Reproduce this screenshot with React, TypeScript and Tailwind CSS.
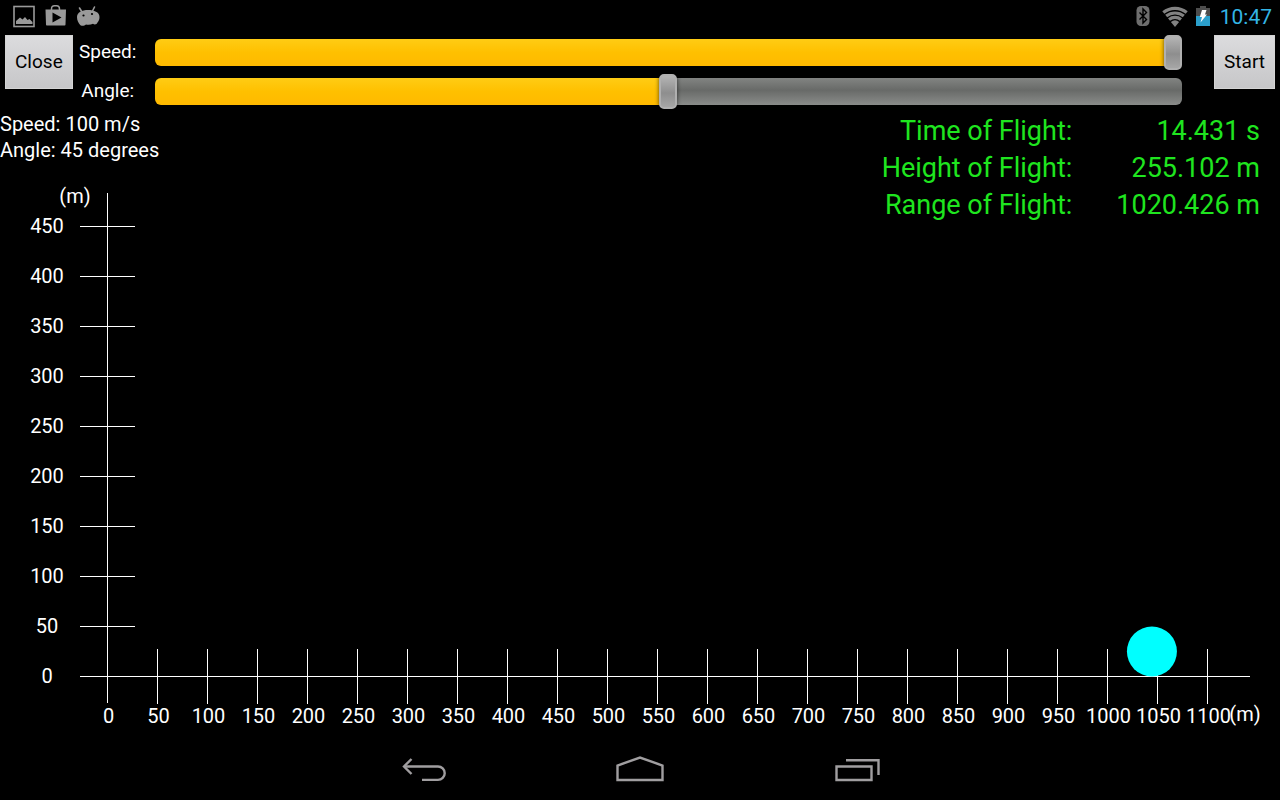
import React, { useState } from 'react';

interface SliderProps {
  id: string;
  label: string;
  value: number;
  max: number;
  onChange: (value: number) => void;
}

const GRAVITY = 9.8;
const ORIGIN_X = 107.5;
const ORIGIN_Y = 565.5;
const BALL_RADIUS = 25;

const xTicks = Array.from({ length: 23 }, (_, i) => i * 50);
const yTicks = Array.from({ length: 10 }, (_, i) => i * 50);

const StatusBar: React.FC = () => (
  <header className="flex h-8 items-center justify-between pl-3 pr-2">
    <div className="flex items-center gap-2 text-[#9a9a9a]">
      <svg width="24" height="24" viewBox="0 0 24 24" fill="none" aria-hidden="true">
        <rect x="2" y="2.5" width="20" height="20" stroke="currentColor" strokeWidth="1.6" />
        <path d="M4 20v-3l4-3.5 2.5 2 2.5-2.5 2.5 3 2-1 3 3v2z" fill="currentColor" />
      </svg>
      <svg width="24" height="24" viewBox="0 0 24 24" fill="none" aria-hidden="true">
        <path d="M7.5 6V5Q7.500 1.800 10.500 1.800h2Q15.500 1.800 15.500 5V6" stroke="currentColor" strokeWidth="1.5" />
        <path d="M1.500 5.500h20.500l-.5 15q0 1-.8 1H2.800q-.8 0-.8-1z" fill="currentColor" />
        <path d="M8.500 8.500v10l9-5z" fill="#000" />
      </svg>
      <svg width="24" height="24" viewBox="0 0 24 24" fill="none" aria-hidden="true">
        <path d="M3.500 4l2.500 4M18.500 3l-2 4" stroke="currentColor" strokeWidth="1.6" strokeLinecap="round" />
        <path d="M1 13C1 8.500 6 6 12 6s11.500 2 11.500 7c0 3-1 4-2 5.500-.6 2-3 2.500-4.500 1.300-2 1-5 1.200-7 .7-1.500 1.500-5 1.800-6 .3C2.500 19 1 16.500 1 13z" fill="currentColor" />
        <circle cx="7.5" cy="11.500" r="1.100" fill="#000" />
        <circle cx="16" cy="10" r="1.100" fill="#000" />
      </svg>
    </div>
    <div className="flex items-center gap-2.5">
      <div className="flex items-center gap-2">
        <svg width="22" height="22" viewBox="0 0 22 22" fill="none" aria-hidden="true">
          <rect x="4.500" y="1" width="13" height="20" rx="4.500" fill="#6e6e6e" />
          <path d="M7.500 7.500l7 7L11 18V4l3.500 3.500-7 7" stroke="#000" strokeWidth="1.400" />
        </svg>
        <svg width="26" height="22" viewBox="0 0 26 22" fill="none" stroke="#828282" strokeWidth="3.2" aria-hidden="true">
          <path d="M1.300 7.600a18.500 18.500 0 0 1 23.400 0" />
          <path d="M4.200 11.100a14 14 0 0 1 17.600 0" />
          <path d="M7 14.600a9.500 9.500 0 0 1 12 0" />
          <path d="M8.900 17L13 22l4.100-5a6.500 6.500 0 0 0-8.200 0z" fill="#828282" stroke="none" />
        </svg>
        <svg width="14" height="22" viewBox="0 0 14 22" aria-hidden="true">
          <path d="M4 1h6v2h4v8H0V3h4z" fill="#4d4d4d" />
          <path d="M0 11h14v10H0z" fill="#2b9fcb" />
          <path d="M6 5h4.500L9 9.500h2L4.500 17.500 6 12H3.800z" fill="#fff" />
        </svg>
      </div>
      <time className="pt-px text-[21px] leading-6 text-[#33b5e5]">10:47</time>
    </div>
  </header>
);

const Slider: React.FC<SliderProps> = ({ id, label, value, max, onChange }) => (
  <div className="flex h-[35px] items-center gap-3">
    <label htmlFor={id} className="w-[70px] shrink-0 pb-0.5 text-center">
      {label}
    </label>
    <input
      id={id}
      type="range"
      min={0}
      max={max}
      value={value}
      onChange={e => onChange(Number(e.target.value))}
      style={{ '--fill': `${(value / max) * 100}%` } as React.CSSProperties}
      className="h-[35px] w-full min-w-0 flex-1 cursor-pointer appearance-none bg-transparent [&::-webkit-slider-runnable-track]:h-[27px] [&::-webkit-slider-runnable-track]:rounded-md [&::-webkit-slider-runnable-track]:[background:linear-gradient(#ffcc14,#ffc000_50%,#ffb900)_0_0/var(--fill)_100%_no-repeat,linear-gradient(#828482,#686a68_45%,#8a8c8a)] [&::-webkit-slider-thumb]:-mt-1 [&::-webkit-slider-thumb]:h-[35px] [&::-webkit-slider-thumb]:w-[18px] [&::-webkit-slider-thumb]:appearance-none [&::-webkit-slider-thumb]:rounded-[5px] [&::-webkit-slider-thumb]:border-2 [&::-webkit-slider-thumb]:border-[#b0b0b0] [&::-webkit-slider-thumb]:bg-[linear-gradient(#b4b4b4,#8e8e8e_55%,#a6a6a6)] [&::-webkit-slider-thumb]:shadow-[0_0_4px_#000000a0]"
    />
  </div>
);

const buttonClass =
  'h-[54px] shrink-0 bg-linear-to-b from-[#dcdcde] to-[#c6c6c8] px-2.5 text-black shadow-[inset_0_0_0_1px_#d4d4d4]';

const Plot: React.FC<{ range: number }> = ({ range }) => (
  <svg viewBox="0 0 1280 629" className="col-start-1 row-start-1 h-auto w-full" role="img" aria-label="Flight plot">
    <g stroke="#fff" strokeWidth="1">
      <line x1={ORIGIN_X} y1="82" x2={ORIGIN_X} y2="592" />
      <line x1="80" y1={ORIGIN_Y} x2="1250" y2={ORIGIN_Y} />
      {yTicks.slice(1).map(v => (
        <line key={v} x1="80" y1={ORIGIN_Y - v} x2="135" y2={ORIGIN_Y - v} />
      ))}
      {xTicks.slice(1).map(v => (
        <line key={v} x1={ORIGIN_X + v} y1="538" x2={ORIGIN_X + v} y2="593" />
      ))}
    </g>
    <g fill="#fff" fontSize="20" textAnchor="middle">
      <text x="75" y="92">(m)</text>
      {yTicks.map(v => (
        <text key={v} x="47" y={ORIGIN_Y - v + 6}>{v}</text>
      ))}
      {xTicks.map(v => (
        <text key={v} x={ORIGIN_X + v + 1} y="612">{v}</text>
      ))}
      <text x="1245" y="610">(m)</text>
    </g>
    <circle cx={ORIGIN_X + range + BALL_RADIUS - 1} cy={ORIGIN_Y - BALL_RADIUS} r={BALL_RADIUS} fill="#00ffff" />
  </svg>
);

const NavBar: React.FC = () => (
  <nav className="flex h-[60px] justify-center text-[#a09ea0]">
    <button aria-label="Back" className="flex w-[216px] items-center justify-center">
      <svg width="48" height="30" viewBox="0 0 48 30" fill="none" stroke="currentColor" strokeWidth="2.4">
        <path d="M11.500 4L4 11.500l7.500 7.500" />
        <path d="M4.500 11.500H38a6.700 6.700 0 0 1 0 13.400H22" />
      </svg>
    </button>
    <button aria-label="Home" className="flex w-[216px] items-center justify-center">
      <svg width="48" height="30" viewBox="0 0 48 30" fill="none" stroke="currentColor" strokeWidth="2.4">
        <path d="M1.500 25V10.500L24 2.500l22.500 8V25z" />
      </svg>
    </button>
    <button aria-label="Recent apps" className="flex w-[216px] items-center justify-center">
      <svg width="48" height="30" viewBox="0 0 48 30" fill="none" stroke="currentColor" strokeWidth="2.4">
        <path d="M4.500 11.500h35V25h-35z" />
        <path d="M14 5.200h32.500V20" />
      </svg>
    </button>
  </nav>
);

const App: React.FC = () => {
  const [speed, setSpeed] = useState(100);
  const [angle, setAngle] = useState(45);

  const rad = (angle * Math.PI) / 180;
  const time = (2 * speed * Math.sin(rad)) / GRAVITY;
  const height = (speed * Math.sin(rad)) ** 2 / (2 * GRAVITY);
  // range is based on the flight time rounded to milliseconds
  const range = speed * Math.cos(rad) * (Math.round(time * 1000) / 1000);

  const results = [
    { name: 'Time of Flight:', value: `${time.toFixed(3)} s` },
    { name: 'Height of Flight:', value: `${height.toFixed(3)} m` },
    { name: 'Range of Flight:', value: `${range.toFixed(3)} m` },
  ];

  return (
    <div className="flex min-h-screen flex-col bg-black font-[Roboto,sans-serif] text-[20px] leading-[26px] text-white">
      <StatusBar />

      {/* Controls */}
      <div className="flex items-start px-[5px] pt-[3px] text-[19px]">
        <button className={buttonClass}>Close</button>
        <div className="mr-8 flex min-w-0 flex-1 flex-col gap-1">
          <Slider id="speed" label="Speed:" value={speed} max={100} onChange={setSpeed} />
          <Slider id="angle" label="Angle:" value={angle} max={90} onChange={setAngle} />
        </div>
        <button className={buttonClass}>Start</button>
      </div>

      {/* Readouts share the cell with the plot */}
      <main className="mt-0.5 grid flex-1 grid-cols-1">
        <Plot range={range} />
        <div className="col-start-1 row-start-1 flex items-start justify-between">
          <div>
            <p>Speed: {speed} m/s</p>
            <p>Angle: {angle} degrees</p>
          </div>
          <dl className="grid grid-cols-[auto_auto] gap-x-11 pr-5 pt-0.5 text-right text-[27px] leading-[37px] text-[#1fe51f]">
            {results.map(r => (
              <React.Fragment key={r.name}>
                <dt>{r.name}</dt>
                <dd>{r.value}</dd>
              </React.Fragment>
            ))}
          </dl>
        </div>
      </main>

      <NavBar />
    </div>
  );
};

export default App;
